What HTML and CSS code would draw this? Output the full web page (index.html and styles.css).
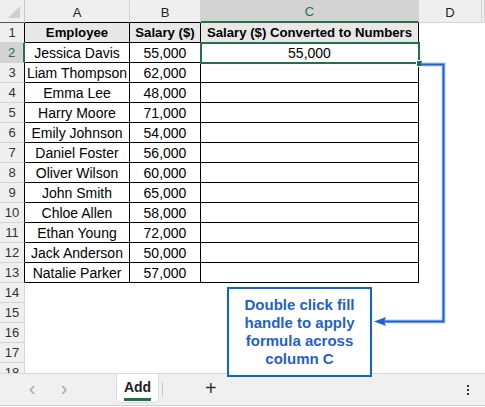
FILE: index.html
```html
<!DOCTYPE html>
<html lang="en">
  <head>
    <meta charset="UTF-8" />
    <title>Salary Converted to Numbers</title>
    <link rel="stylesheet" href="styles.css">
  </head>
  <body>
    <div class="app">
      <div class="sheet">
        <div class="corner"><span class="tri"></span></div>
        <div class="ch">A</div>
        <div class="ch">B</div>
        <div class="ch sel">C</div>
        <div class="ch">D</div>
        <div class="ch last"></div>

        <div class="rh edge">1</div>
        <div class="t hd">Employee</div>
        <div class="t hd">Salary ($)</div>
        <div class="t hd">Salary ($) Converted to Numbers</div>
        <div class="c"></div><div class="c"></div>

        <div class="rh edge on">2</div>
        <div class="t">Jessica Davis</div><div class="t">55,000</div><div class="t">55,000</div>
        <div class="c"></div><div class="c"></div>

        <div class="rh edge">3</div>
        <div class="t">Liam Thompson</div><div class="t">62,000</div><div class="t"></div>
        <div class="c"></div><div class="c"></div>

        <div class="rh edge">4</div>
        <div class="t">Emma Lee</div><div class="t">48,000</div><div class="t"></div>
        <div class="c"></div><div class="c"></div>

        <div class="rh edge">5</div>
        <div class="t">Harry Moore</div><div class="t">71,000</div><div class="t"></div>
        <div class="c"></div><div class="c"></div>

        <div class="rh edge">6</div>
        <div class="t">Emily Johnson</div><div class="t">54,000</div><div class="t"></div>
        <div class="c"></div><div class="c"></div>

        <div class="rh edge">7</div>
        <div class="t">Daniel Foster</div><div class="t">56,000</div><div class="t"></div>
        <div class="c"></div><div class="c"></div>

        <div class="rh edge">8</div>
        <div class="t">Oliver Wilson</div><div class="t">60,000</div><div class="t"></div>
        <div class="c"></div><div class="c"></div>

        <div class="rh edge">9</div>
        <div class="t">John Smith</div><div class="t">65,000</div><div class="t"></div>
        <div class="c"></div><div class="c"></div>

        <div class="rh edge">10</div>
        <div class="t">Chloe Allen</div><div class="t">58,000</div><div class="t"></div>
        <div class="c"></div><div class="c"></div>

        <div class="rh edge">11</div>
        <div class="t">Ethan Young</div><div class="t">72,000</div><div class="t"></div>
        <div class="c"></div><div class="c"></div>

        <div class="rh edge">12</div>
        <div class="t">Jack Anderson</div><div class="t">50,000</div><div class="t"></div>
        <div class="c"></div><div class="c"></div>

        <div class="rh edge">13</div>
        <div class="t">Natalie Parker</div><div class="t">57,000</div><div class="t"></div>
        <div class="c"></div><div class="c"></div>

        <div class="rh">14</div><div class="c"></div><div class="c"></div><div class="c"></div><div class="c"></div><div class="c"></div>
        <div class="rh">15</div><div class="c"></div><div class="c"></div><div class="c"></div><div class="c"></div><div class="c"></div>
        <div class="rh">16</div><div class="c"></div><div class="c"></div><div class="c"></div><div class="c"></div><div class="c"></div>
        <div class="rh">17</div><div class="c"></div><div class="c"></div><div class="c"></div><div class="c"></div><div class="c"></div>
        <div class="rh">18</div><div class="c"></div><div class="c"></div><div class="c"></div><div class="c"></div><div class="c"></div>

        <!-- active cell C2 with fill handle -->
        <div class="selection"><span class="handle"></span></div>
      </div>

      <div class="tabs">
        <span class="nav">&lsaquo;</span>
        <span class="nav">&rsaquo;</span>
        <div class="tab"><span class="tab-label">Add</span></div>
        <span class="sep"></span>
        <span class="plus">+</span>
        <span class="more"><i></i><i></i><i></i></span>
      </div>

      <svg class="connector" width="485" height="407" viewBox="0 0 485 407">
        <polyline points="421,64.5 443.5,64.5 443.5,321.5 383,321.5" fill="none" stroke="#b7cdf0" stroke-width="4" />
        <polyline points="421,64.5 443.5,64.5 443.5,321.5 383,321.5" fill="none" stroke="#1c63d4" stroke-width="2" />
        <polygon points="374,321.5 386,317 384,321.5 386,326" fill="#1c63d4" />
      </svg>

      <div class="callout">Double click fill handle to apply formula across column C</div>
    </div>
  </body>
</html>
```

FILE: styles.css
```css
body {
  margin: 0;
  font-family: "Liberation Sans", Arial, sans-serif;
  background: #fff;
}
.app {
  position: relative;
  width: 485px;
  height: 407px;
  overflow: hidden;
}
.sheet {
  position: relative;
  display: grid;
  grid-template-columns: 25px 105px 71px 218px 63px 3px;
  grid-template-rows: 23px;
  grid-auto-rows: 20px;
  height: 373px;
  overflow: hidden;
  font-size: 14px;
  color: #000;
}
.sheet > div {
  box-sizing: border-box;
  display: flex;
  align-items: center;
  justify-content: center;
  white-space: nowrap;
}
.corner {
  background: #efefef;
  border-right: 1px solid #c6c6c6;
  border-bottom: 1px solid #555;
  position: relative;
}
.tri {
  position: absolute;
  right: 4px;
  bottom: 4px;
  width: 0;
  height: 0;
  border-left: 12px solid transparent;
  border-bottom: 12px solid #cfcfcf;
}
.ch {
  background: #efefef;
  border-right: 1px solid #d4d4d4;
  border-bottom: 1px solid #000;
  font-size: 13px;
  color: #222;
  padding-top: 2px;
}
.ch.sel {
  background: #d3d3d3;
  color: #217346;
  border-bottom: 2px solid #217346;
}
.ch.last,
.ch:nth-child(5) {
  border-bottom-color: #d4d4d4;
}
.rh {
  background: #efefef;
  border-right: 1px solid #d4d4d4;
  border-bottom: 1px solid #d4d4d4;
  font-size: 13px;
  color: #333;
}
.rh.edge {
  border-right-color: #000;
}
.rh.on {
  background: #d3d3d3;
  color: #217346;
  border-right: 2px solid #217346;
}
.t {
  border-right: 1px solid #000;
  border-bottom: 1px solid #000;
}
.hd {
  background: #e8e8e8;
  font-weight: bold;
  font-size: 13.2px;
}
.selection {
  position: absolute;
  left: 200px;
  top: 42px;
  width: 220px;
  height: 22px;
  border: 2px solid #217346;
}
.handle {
  position: absolute;
  right: -5px;
  bottom: -5px;
  width: 5px;
  height: 5px;
  background: #217346;
  border: 1px solid #fff;
}
.tabs {
  display: flex;
  align-items: center;
  height: 31px;
  background: #f0f0f0;
  border-top: 1px solid #d9d9d9;
  border-bottom: 1px solid #cfcfcf;
  position: relative;
}
.nav {
  width: 32px;
  text-align: center;
  font-size: 20px;
  color: #a8a8a8;
  margin-top: -3px;
}
.nav:first-child {
  margin-left: 16px;
}
.tab {
  margin-left: 36px;
  align-self: stretch;
  width: 43px;
  background: #fff;
  border: 1px solid #dcdcdc;
  border-top: none;
  border-radius: 0 0 5px 5px;
  display: flex;
  justify-content: center;
  padding-top: 4px;
  box-sizing: border-box;
  margin-bottom: 2px;
}
.tab-label {
  font-weight: bold;
  font-size: 14px;
  color: #222;
  height: 20px;
  border-bottom: 3px solid #217346;
  line-height: 18px;
}
.sep {
  width: 1px;
  height: 15px;
  background: #c8c8c8;
  margin-left: 3px;
}
.plus {
  margin-left: 42px;
  font-size: 20px;
  font-weight: 300;
  color: #333;
  margin-top: -2px;
}
.more {
  margin-left: auto;
  margin-right: 16px;
  display: flex;
  flex-direction: column;
  gap: 2px;
}
.more i {
  display: block;
  width: 2px;
  height: 2px;
  background: #333;
}
.connector {
  position: absolute;
  left: 0;
  top: 0;
  pointer-events: none;
}
.callout {
  position: absolute;
  left: 227px;
  top: 287px;
  width: 145px;
  height: 90px;
  box-sizing: border-box;
  border: 2.5px solid #0a66cc;
  background: #fff;
  color: #1f5fcf;
  font-family: "Liberation Sans", Arial, sans-serif;
  font-weight: bold;
  font-size: 15px;
  line-height: 18px;
  text-align: center;
  padding: 7px 8px 0;
}
```
